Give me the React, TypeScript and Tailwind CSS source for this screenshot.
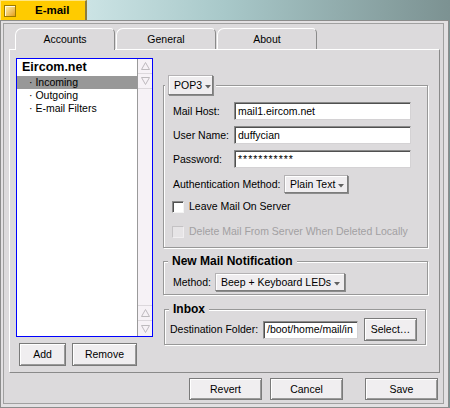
import React from 'react';

const font = "font-['Liberation_Sans',Arial,sans-serif]";

const Arrow = () => (
  <svg width="6" height="4" viewBox="0 0 6 4" className="ml-[3px] mt-[3px] shrink-0">
    <polygon points="0,0 6,0 3,3.5" fill="#606060" />
  </svg>
);

const MenuField = ({ label, w, h = 20 }: { label: string; w: number; h?: number }) => (
  <div
    style={{ width: w, height: h }}
    className="flex items-center pl-[5px] bg-[#efedef] border border-[#b4b2b4] border-r-[#7c7c7c] border-b-[#7c7c7c] shadow-[1px_1px_0_#8c8c8c,inset_1px_1px_0_#fff] text-[10.5px] leading-none whitespace-nowrap"
  >
    <span>{label}</span>
    <Arrow />
  </div>
);

const TextField = ({ value, w, h = 18, spaced }: { value: string; w: number; h?: number; spaced?: boolean }) => (
  <div
    style={{ width: w, height: h }}
    className={`flex items-center pl-[3px] bg-white border border-[#8a8a8a] border-r-[#d4d2d4] border-b-[#d4d2d4] shadow-[inset_1px_1px_0_#505050] text-[10.5px] leading-none overflow-hidden whitespace-nowrap ${
      spaced ? 'tracking-[1px]' : ''
    }`}
  >
    {value}
  </div>
);

const Button = ({ label, w, h }: { label: string; w: number; h: number }) => (
  <div
    style={{ width: w, height: h }}
    className="flex items-center justify-center bg-[#f0eef0] border border-[#7a7a7a] shadow-[inset_1px_1px_0_#fff,inset_-1px_-1px_0_#9a9a9a] text-[10.5px] leading-none"
  >
    {label}
  </div>
);

const Check = ({ label, disabled }: { label: string; disabled?: boolean }) => (
  <div className="flex items-center h-[13px] -ml-[1px]">
    <div
      className={
        disabled
          ? 'w-[12px] h-[12px] bg-[#e6e4e6] border border-[#c4c2c4] border-r-[#f0eef0] border-b-[#f0eef0]'
          : 'w-[12px] h-[12px] bg-white border border-[#8a8a8a] border-r-[#f4f4f4] border-b-[#f4f4f4] shadow-[inset_1px_1px_0_#505050]'
      }
    />
    <span className={`ml-[5px] text-[10.5px] leading-none whitespace-nowrap ${disabled ? 'text-[#a2a0a2]' : ''}`}>{label}</span>
  </div>
);

const ScrollArrow = ({ up, last }: { up?: boolean; last?: boolean }) => (
  <div className={`h-[15px] flex items-center justify-center ${last ? '' : 'border-b border-[#dcd8dc]'}`}>
    <svg width="9" height="8" viewBox="0 0 9 8">
      <polygon
        points={up ? '4.5,0.5 8.5,7.5 0.5,7.5' : '0.5,0.5 8.5,0.5 4.5,7.5'}
        fill="none"
        stroke="#bdbabd"
      />
    </svg>
  </div>
);

const Tab = ({ label, active }: { label: string; active?: boolean }) => (
  <div
    className={`w-[100px] flex items-center justify-center border-t border-l border-white border-r border-r-[#8a8a8a] rounded-tl-[7px] rounded-tr-[5px] text-[10.5px] leading-none ${
      active ? 'h-[22px] -mb-[1px] relative z-10 bg-[#dcdadc]' : 'h-[21px]'
    }`}
  >
    {label}
  </div>
);

const fieldset = 'border border-[#989898] shadow-[1px_1px_0_#fff,inset_1px_1px_0_#fff]';

export default function App() {
  return (
    <div className={`w-[450px] h-[408px] overflow-hidden bg-gradient-to-r from-[#e2f5f6] via-[#a8c8c9] to-[#7c9292] ${font} text-black`}>
      {/* window tab */}
      <div className="flex h-[20px]">
        <div className="w-[87px] h-[20px] flex items-center bg-[#ffcb00] border-t border-l border-[#ffe680] border-r-2 border-r-[#8c7c3c]">
          <div className="ml-[3px] w-[12px] h-[12px] border border-[#9c7a00] bg-gradient-to-br from-[#fff4a8] to-[#e4a000] shadow-[inset_1px_1px_0_#fffbe0]" />
          <span className="ml-[19px] text-[11.5px] font-bold leading-none">E-mail</span>
        </div>
      </div>

      {/* window frame */}
      <div className="w-[449px] h-[388px] border border-[#8c8c8c] bg-[#e2e0e2] pl-[2px] pt-[2px] pr-[4px] pb-[3px]">
        <div className="w-full h-full border border-[#a0a0a0] bg-[#dcdadc] flex flex-col">
          {/* tabs */}
          <div className="mt-[4px] ml-[11px] flex gap-[1px] items-start h-[21px]">
            <Tab label="Accounts" active />
            <Tab label="General" />
            <Tab label="About" />
          </div>

          {/* tab body */}
          <div className="ml-[5px] w-[431px] h-[324px] border border-white border-r-[#8a8a8a] border-b-[#8a8a8a] flex items-start">
            {/* accounts list */}
            <div className="ml-[6px] mt-[8px] flex flex-col">
              <div className="w-[137px] h-[279px] border border-[#0000ff] flex bg-white">
                <div className="w-[121px] h-full border-r border-[#9a9a9a] flex flex-col">
                  <div className="h-[17px] pl-[5px] flex items-center text-[12.5px] font-bold leading-none">Eircom.net</div>
                  <div className="h-[13px] pl-[12px] flex items-center bg-[#989898] text-[10.5px] leading-none">· Incoming</div>
                  <div className="h-[13px] pl-[12px] flex items-center text-[10.5px] leading-none">· Outgoing</div>
                  <div className="h-[13px] pl-[12px] flex items-center text-[10.5px] leading-none">· E-mail Filters</div>
                </div>
                <div className="flex-1 bg-[#f6f2f6] flex flex-col justify-between">
                  <div>
                    <ScrollArrow up />
                    <ScrollArrow />
                  </div>
                  <div className="border-t border-[#dcd8dc]">
                    <ScrollArrow up />
                    <ScrollArrow last />
                  </div>
                </div>
              </div>
              <div className="mt-[6px] ml-[3px] flex gap-[6px]">
                <Button label="Add" w={47} h={23} />
                <Button label="Remove" w={65} h={23} />
              </div>
            </div>

            {/* settings */}
            <div className="ml-[10px] mt-[25px] flex flex-col w-[265px]">
              <fieldset className={`w-[265px] ${fieldset}`}>
                <legend className="ml-[1px] px-[3px] bg-[#dcdadc]">
                  <MenuField label="POP3" w={45} />
                </legend>
                <div className="pl-[9px] pt-[7px] pb-[9px] flex flex-col">
                  <div className="flex items-center h-[18px]">
                    <span className="w-[61px] text-[10.5px] leading-none">Mail Host:</span>
                    <TextField value="mail1.eircom.net" w={177} />
                  </div>
                  <div className="mt-[6px] flex items-center h-[18px]">
                    <span className="w-[61px] text-[10.5px] leading-none">User Name:</span>
                    <TextField value="duffycian" w={177} />
                  </div>
                  <div className="mt-[6px] flex items-center h-[18px]">
                    <span className="w-[61px] text-[10.5px] leading-none">Password:</span>
                    <TextField value="***********" w={177} spaced />
                  </div>
                  <div className="mt-[7px] flex items-center h-[18px]">
                    <span className="w-[111px] text-[10.5px] leading-none whitespace-nowrap">Authentication Method:</span>
                    <MenuField label="Plain Text" w={64} h={18} />
                  </div>
                  <div className="mt-[7px]">
                    <Check label="Leave Mail On Server" />
                  </div>
                  <div className="mt-[12px]">
                    <Check label="Delete Mail From Server When Deleted Locally" disabled />
                  </div>
                </div>
              </fieldset>

              <fieldset className={`mt-[6px] w-[265px] ${fieldset}`}>
                <legend className="ml-[4px] px-[4px] bg-[#dcdadc] text-[12px] font-bold leading-[14px]">New Mail Notification</legend>
                <div className="pl-[9px] pt-[5px] pb-[3px] flex items-center">
                  <span className="w-[42px] text-[10.5px] leading-none">Method:</span>
                  <MenuField label="Beep + Keyboard LEDs" w={130} h={18} />
                </div>
              </fieldset>

              <fieldset className={`mt-[7px] ml-[1px] w-[262px] ${fieldset}`}>
                <legend className="ml-[4px] px-[4px] bg-[#dcdadc] text-[12px] font-bold leading-[14px]">Inbox</legend>
                <div className="pl-[5px] pt-[2px] pb-[3px] flex items-center">
                  <span className="w-[93px] text-[10.5px] leading-none whitespace-nowrap">Destination Folder:</span>
                  <TextField value="/boot/home/mail/in" w={95} />
                  <div className="ml-[6px]">
                    <Button label="Select…" w={53} h={23} />
                  </div>
                </div>
              </fieldset>
            </div>
          </div>

          {/* bottom buttons */}
          <div className="mt-[5px] ml-[185px] flex">
            <Button label="Revert" w={73} h={22} />
            <div className="ml-[8px]">
              <Button label="Cancel" w={73} h={22} />
            </div>
            <div className="ml-[22px]">
              <Button label="Save" w={73} h={22} />
            </div>
          </div>
        </div>
      </div>
    </div>
  );
}
